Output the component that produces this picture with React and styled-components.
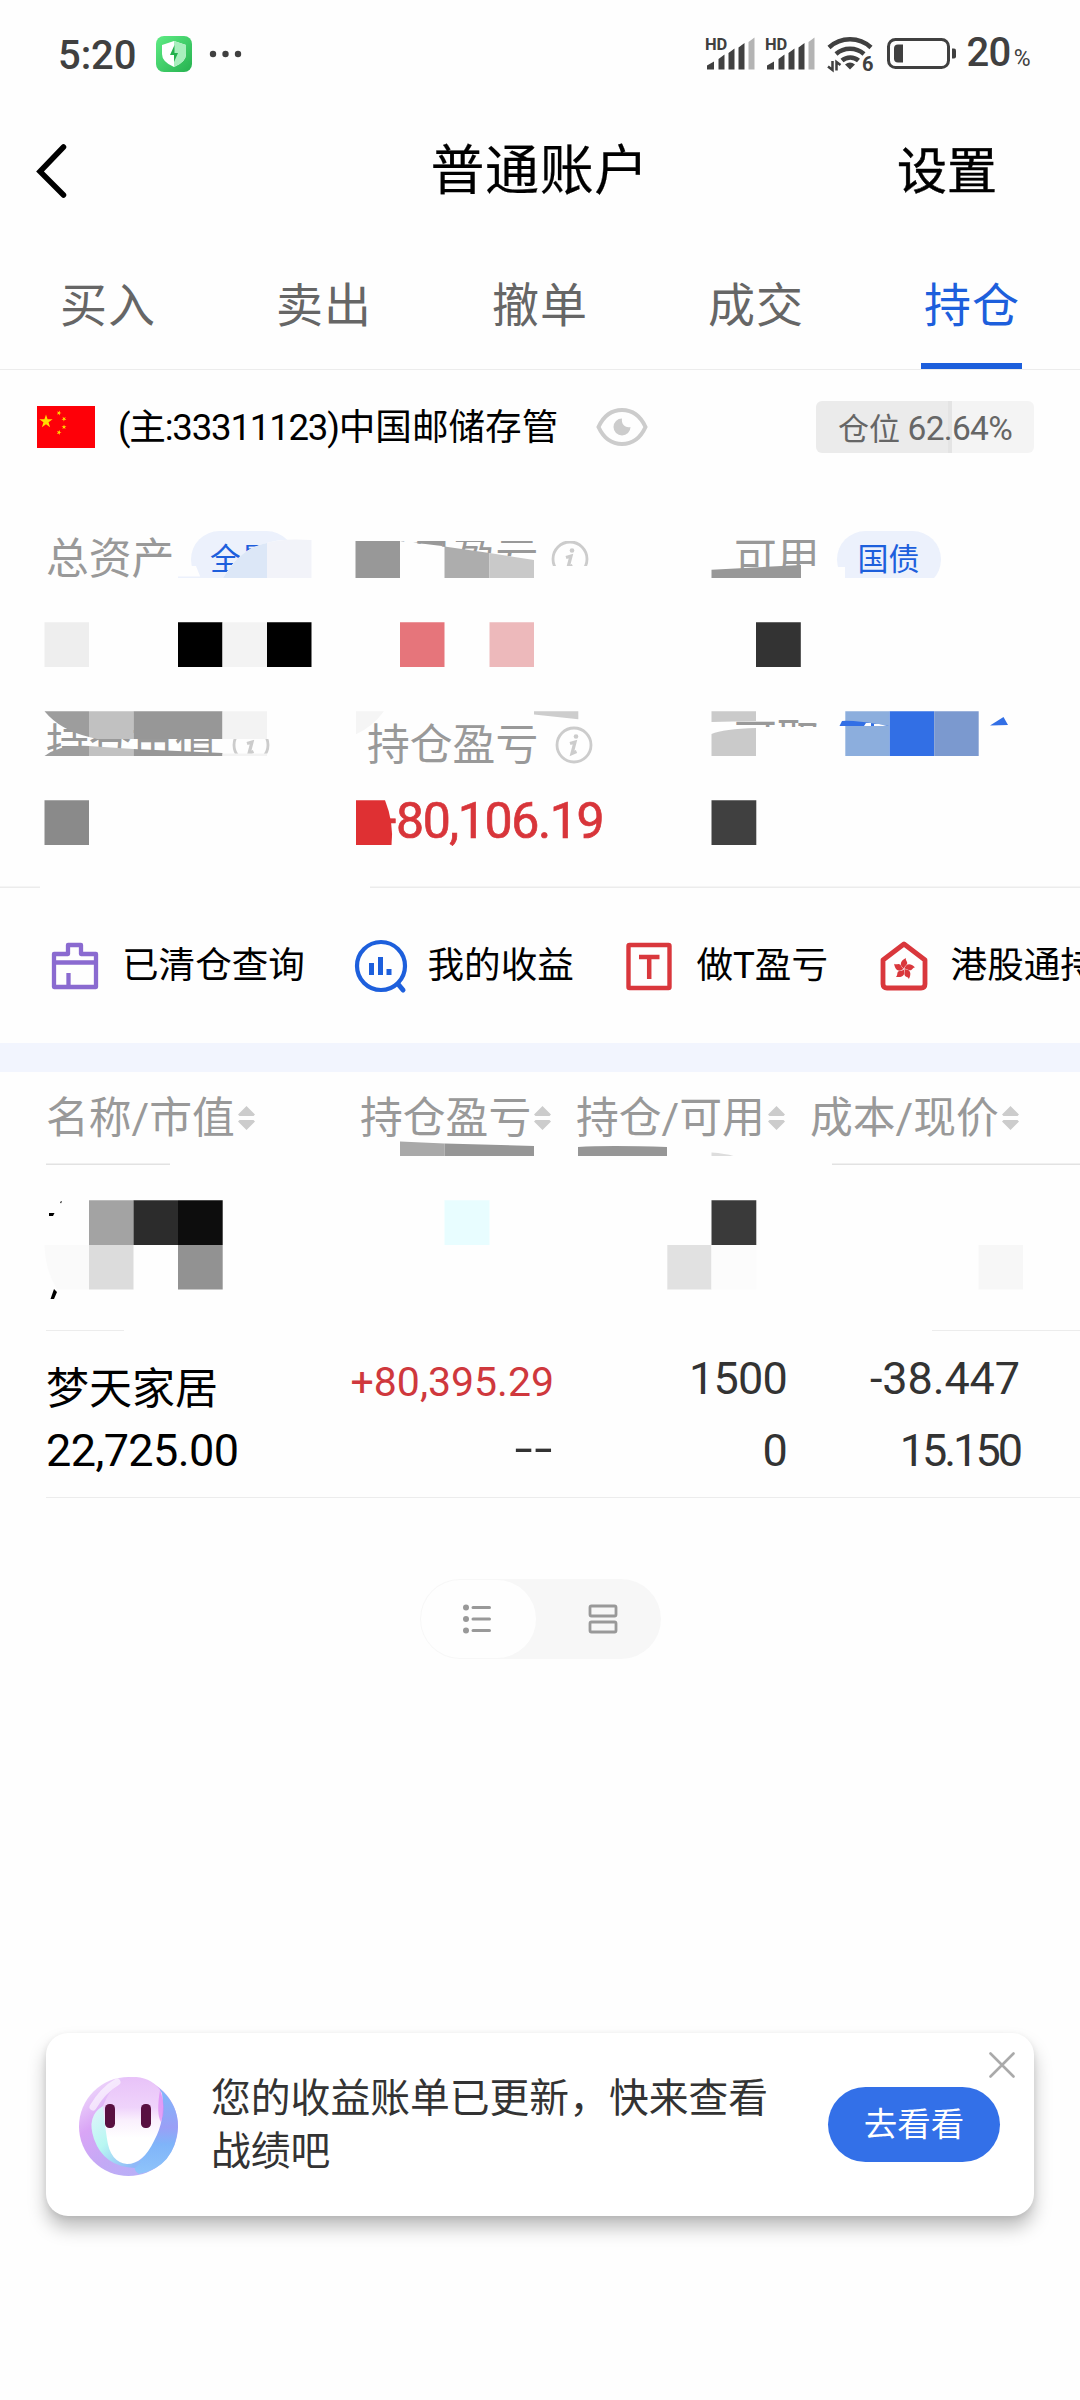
import styled, { createGlobalStyle } from 'styled-components';

const GlobalStyle = createGlobalStyle`
  * {
    box-sizing: border-box;
  }

  body {
    margin: 0;
    background: #fefefe;
    color: #000;
    font-family: Roboto, 'Noto Sans CJK SC', sans-serif;
  }
`;

const Page = styled.div`
  width: 1080px;
  height: 2400px;
  overflow: hidden;
  display: flex;
  flex-direction: column;
  background: #fefefe;
  white-space: nowrap;
`;

const StatusBar = styled.div`
  height: 108px;
  padding: 0 50px 0 58px;
  display: flex;
  justify-content: space-between;
  align-items: center;
  color: #404040;
`;

const StatusGroup = styled.div`
  display: flex;
  align-items: center;
`;

const Clock = styled.span`
  width: 98px;
  padding-top: 3px;
  font-size: 40px;
  font-weight: 500;
  line-height: 108px;
  letter-spacing: -0.1px;
`;

const Battery = styled.span`
  padding-top: 4px;
  margin-left: 9px;
  font-size: 40px;
  font-weight: 500;
  line-height: 108px;
  letter-spacing: -0.6px;

  small {
    font-size: 23px;
    font-weight: 400;
    margin-left: 3px;
  }
`;

const Header = styled.header`
  height: 127px;
  padding: 0 83px 0 36px;
  display: grid;
  grid-template-columns: 1fr 216px 1fr;
  align-items: center;

  h1 {
    margin: 0 0 0 22px;
    font-size: 54px;
    font-weight: 400;
    line-height: 80px;
    letter-spacing: 0.6px;
    -webkit-text-stroke: 0.2px #000;
  }
`;

const Settings = styled.span`
  font-size: 50px;
  line-height: 80px;
  text-align: right;
  -webkit-text-stroke: 0.5px #000;
`;

const Tabs = styled.nav`
  height: 135px;
  display: grid;
  grid-template-columns: repeat(5, 1fr);
  border-bottom: 1px solid #ececec;
`;

const Tab = styled.span`
  display: flex;
  flex-direction: column;
  align-items: center;
  justify-content: space-between;
  padding-top: 36px;
  font-size: 47px;
  line-height: 70px;
  letter-spacing: 1px;
  color: ${({ $active }) => ($active ? '#1d5fdc' : '#666')};

  &::after {
    content: '';
    width: 101px;
    height: 6px;
    margin-right: 1px;
    background: ${({ $active }) => ($active ? '#1d5fdc' : 'transparent')};
  }
`;

const Account = styled.section`
  height: 114px;
  padding: 0 46px 0 37px;
  display: flex;
  align-items: center;
`;

const AccountName = styled.span`
  width: 478px;
  margin-left: 23px;
  padding-top: 2px;
  font-size: 36.6px;
  line-height: 60px;
`;

const AccountNo = styled.span`
  letter-spacing: -1.2px;
`;

const Position = styled.span`
  width: 218px;
  height: 52px;
  margin-left: auto;
  border-radius: 6px;
  background: linear-gradient(
    90deg,
    #ebebeb 0 132px,
    #e4e4e4 132px 136px,
    #f4f4f4 136px
  );
  color: #666;
  font-size: 33.5px;
  line-height: 56px;
  text-align: center;
  letter-spacing: -0.7px;

  b {
    font-weight: 400;
    font-size: 31px;
    letter-spacing: 0;
  }
`;

const Assets = styled.section`
  position: relative;
  height: 404px;
  padding: 45px 0 0 46px;
  display: grid;
  grid-template-columns: 321px 367px 1fr;
  grid-template-rows: 60px 112px 88px 60px;
  align-items: center;
`;

const Label = styled.span`
  display: flex;
  align-items: center;
  font-size: 42.8px;
  line-height: 60px;
  color: #999;
  padding-bottom: ${({ $lift }) => $lift || 0}px;
`;

const Pill = styled.span`
  width: 104px;
  height: 57px;
  margin-left: 17px;
  padding-right: ${({ $shift }) => $shift || 0}px;
  border-radius: 29px;
  background: #ecf1fc;
  color: #1d5fdc;
  font-size: 31px;
  line-height: 57px;
  text-align: center;
`;

const Profit = styled.span`
  grid-column: 2;
  grid-row: 4;
  padding: 3px 0 0 2px;
  color: #d8353a;
  font-size: 50px;
  line-height: 60px;
  letter-spacing: -1.4px;
  -webkit-text-stroke: 0.7px #d8353a;
`;

const Mosaic = styled.svg`
  position: absolute;
  left: 0;
  top: 0;
  width: 1080px;
  height: 100%;
`;

const Shortcuts = styled.section`
  height: 155px;
  padding: 1px 0 0 47px;
  display: flex;
  align-items: center;
  gap: 47.6px;
  overflow: hidden;
`;

const Shortcut = styled.span`
  display: flex;
  flex: none;
  align-items: center;
  gap: 19px;
  font-size: 36.6px;
  line-height: 60px;
`;

const Band = styled.div`
  height: 29px;
  background: #f2f5fe;
`;

const Holdings = styled.section`
  position: relative;
  height: 427px;
`;

const HoldingsHead = styled.div`
  height: 92px;
  padding-left: 46px;
  display: grid;
  grid-template-columns: 314px 216px 234px 1fr;
  align-items: center;
`;

const Sortable = styled.span`
  display: flex;
  align-items: center;
  gap: 3px;
  color: #999;
  font-size: 42.8px;
  line-height: 60px;
`;

const Holding = styled.div`
  height: 167px;
  margin-left: 46px;
  padding: 0 0 24px 1px;
  display: grid;
  grid-template-columns: 255px 252px 233px 233px;
  border-bottom: 1px solid #ececec;
`;

const Cell = styled.div`
  display: flex;
  flex-direction: column;
  justify-content: flex-end;
  align-items: ${({ $left }) => ($left ? 'flex-start' : 'flex-end')};
  gap: ${({ $gap }) => $gap}px;
  color: ${({ $left }) => ($left ? '#000' : '#333')};
  font-size: 45px;
  line-height: 44px;
`;

const Figure = styled.span`
  letter-spacing: ${({ $spacing }) => $spacing || -0.6}px;
  margin-left: -1px;
`;

const Name = styled.span`
  font-size: 43px;
  margin-left: -1px;
`;

const Gain = styled.span`
  color: #cf383d;
  font-size: 41px;
`;

const Dashes = styled.span`
  font-size: 66px;
  font-weight: 300;
  line-height: 48px;
  letter-spacing: 1px;
`;

const Toggle = styled.div`
  align-self: center;
  width: 241px;
  height: 80px;
  margin: 80px 0 374px;
  border-radius: 40px;
  background: #f7f7f7;
  display: flex;
`;

const ToggleItem = styled.span`
  flex: 1 0 ${({ $active }) => ($active ? 113 : 120)}px;
  margin: 1px;
  padding: ${({ $active }) => ($active ? '0 3px 0 0' : '0 0 0 8px')};
  border-radius: 40px;
  background: ${({ $active }) => ($active ? '#fefefe' : 'transparent')};
  display: flex;
  align-items: center;
  justify-content: center;
`;

const Notice = styled.aside`
  position: relative;
  height: 183px;
  margin: 0 46px;
  padding: 0 34px 0 32px;
  display: flex;
  align-items: center;
  border-radius: 22px;
  background: #fff;
  box-shadow: 0 12px 18px rgba(0, 0, 0, 0.25), 0 2px 6px rgba(0, 0, 0, 0.08);

  p {
    margin: 0 0 0 32px;
    color: #333;
    font-size: 39.8px;
    line-height: 53px;
  }
`;

const Go = styled.button`
  width: 172px;
  height: 75px;
  margin-left: auto;
  padding: 0;
  border: 0;
  border-radius: 38px;
  background: #3370e8;
  color: #fff;
  font: 33.5px/75px Roboto, 'Noto Sans CJK SC', sans-serif;
`;

const Close = styled.svg`
  position: absolute;
  top: 19px;
  right: 19px;
`;

const InfoIcon = styled.svg`
  margin-left: ${({ $gap }) => $gap}px;
`;

const AvatarIcon = styled.svg`
  margin-top: 4px;
`;

const Signal = () => (
  <svg width="60" height="52" viewBox="0 -8 60 52" fill="#404040">
    <text x="0" y="13.5" fontSize="16.5" fontWeight="700" letterSpacing="-0.2">
      HD
    </text>
    <path d="M2 33.500v-4l7-4v8zM13.500 33.500V23l6-4.500v15zM23.500 33.500V17l6-4.500v21zM33.500 33.500V11.500l6-4.500v26.500z" />
    <path fill="#b4b4b4" d="M43.500 33.500V6l6-4.500v32z" />
  </svg>
);

const Wifi = () => (
  <svg width="58" height="52" viewBox="0 -6 58 52" fill="none" stroke="#404040">
    <path strokeWidth="4.500" d="M4 13.500a31 31 0 0 1 42 0" />
    <path strokeWidth="4.500" d="M11 20a21.500 21.500 0 0 1 28 0" />
    <path strokeWidth="4.500" d="M17 26.500a12.500 12.500 0 0 1 16.500 0" />
    <path stroke="none" fill="#404040" d="M20 30.500q5-4 10 0l-5 5z" />
    <path strokeWidth="2.500" d="M7.500 27v9L3 32.500M11.500 36.500v-8.500L15.500 31" />
    <text
      x="37"
      y="37"
      fontSize="20"
      fontWeight="700"
      stroke="none"
      fill="#404040"
    >
      6
    </text>
  </svg>
);

const Info = ({ gap }) => (
  <InfoIcon
    $gap={gap}
    width="38"
    height="38"
    viewBox="0 0 38 38"
    fill="none"
    stroke="#ccc"
  >
    <circle cx="19" cy="19" r="17" strokeWidth="2.800" />
    <circle cx="21" cy="10.500" r="2.300" fill="#ccc" stroke="none" />
    <path strokeWidth="3.200" d="M15 17.500l5-1.500-3 11.500 4.500-2" />
  </InfoIcon>
);

const Star = ({ x, y, r, turn = 0 }) => (
  <path
    fill="#ffde00"
    transform={`translate(${x} ${y}) rotate(${turn}) scale(${r})`}
    d="M0-1L.225-.309.951-.309.363.118.588.809 0 .382-.588.809-.363.118-.951-.309-.225-.309z"
  />
);

const Flag = () => (
  <svg width="58" height="42" viewBox="0 0 58 42">
    <rect width="58" height="42" fill="#fe0008" />
    <Star x={9} y={15.5} r={7} />
    <Star x={22} y={7} r={2.6} turn={20} />
    <Star x={27} y={13} r={2.6} turn={40} />
    <Star x={27} y={21} r={2.6} />
    <Star x={22} y={26.5} r={2.6} turn={20} />
  </svg>
);

const Eye = () => (
  <svg width="52" height="40" viewBox="0 0 52 40" fill="none">
    <path
      stroke="#ccc"
      strokeWidth="4"
      d="M2.500 20C8 8 17 3 26 3s18 5 23.500 17C44 32 35 37 26 37S8 32 2.500 20z"
    />
    <path
      fill="#ccc"
      d="M26 11.500a8.500 8.500 0 1 0 8.500 8.500c-5 1.500-9.500-3-8.500-8.500z"
    />
  </svg>
);

const SortIcon = () => (
  <svg width="17" height="24" viewBox="0 0 17 24" fill="#ccc">
    <path d="M8.500 0L17 8.500 15.500 10h-14L0 8.500zM8.500 24L17 15.500 15.500 14h-14L0 15.500z" />
  </svg>
);

const SoldIcon = () => (
  <svg width="56" height="56" viewBox="0 0 56 56" fill="none" stroke="#8a6ad0">
    <path
      strokeWidth="4.300"
      strokeLinejoin="round"
      d="M7 16h14V7h13v9h15v33H7zM7 24.500h42M21.500 49V35"
    />
  </svg>
);

const IncomeIcon = () => (
  <svg width="56" height="56" viewBox="0 0 56 56" fill="none" stroke="#1d5fdc">
    <circle cx="28" cy="28" r="24" strokeWidth="4.200" />
    <path strokeWidth="5" d="M18.500 25v12M27.500 19v18M36 31v6" />
    <path strokeWidth="5" strokeLinecap="round" d="M45 46l5 6" />
  </svg>
);

const TradeIcon = () => (
  <svg width="56" height="56" viewBox="0 0 56 56" fill="none" stroke="#d9373c">
    <rect x="7.500" y="7" width="41" height="43" rx="1" strokeWidth="4.400" />
    <path strokeWidth="4.500" d="M18 19h20.500M28.200 19v22" />
  </svg>
);

const HongKongIcon = () => (
  <svg width="56" height="56" viewBox="0 0 56 56" fill="none">
    <path
      stroke="#d9373c"
      strokeWidth="4.800"
      strokeLinejoin="round"
      d="M28 6l21 16v24q0 4-4 4H11q-4 0-4-4V22z"
    />
    {[0, 72, 144, 216, 288].map((angle) => (
      <path
        key={angle}
        fill="#d9373c"
        transform={`rotate(${angle} 28 31)`}
        d="M28 30.500C23.500 28 23.500 23 30 20c-1 2.500 2 3.500 1 6-.700 1.500-2.500 2-3 4.500z"
      />
    ))}
  </svg>
);

const Avatar = () => (
  <AvatarIcon width="101" height="101" viewBox="0 0 101 101">
    <defs>
      <linearGradient id="ring" x1="0.100" y1="0" x2="0.800" y2="1">
        <stop offset="0" stopColor="#f3e3fc" />
        <stop offset="0.350" stopColor="#d9a5f6" />
        <stop offset="0.650" stopColor="#c3a9f5" />
        <stop offset="1" stopColor="#b5b2f8" />
      </linearGradient>
      <linearGradient id="face" x1="0" y1="0" x2="0" y2="1">
        <stop offset="0" stopColor="#e8c2f8" />
        <stop offset="0.350" stopColor="#efd3fb" />
        <stop offset="0.500" stopColor="#faf0fd" />
        <stop offset="0.700" stopColor="#fff" />
      </linearGradient>
      <linearGradient id="side" x1="0" y1="0" x2="0" y2="1">
        <stop offset="0" stopColor="#7db8fa" />
        <stop offset="0.450" stopColor="#9a9ff6" />
        <stop offset="0.650" stopColor="#7fb4f9" />
        <stop offset="1" stopColor="#8fc4fa" />
      </linearGradient>
      <linearGradient id="inner" x1="0" y1="0" x2="0.800" y2="1">
        <stop offset="0" stopColor="#e3f3fb" />
        <stop offset="0.500" stopColor="#b8f7f2" />
        <stop offset="1" stopColor="#8fb8f8" />
      </linearGradient>
    </defs>
    <circle cx="50.500" cy="50.500" r="49.500" fill="url(#ring)" />
    <path
      fill="url(#side)"
      d="M82 13Q100 28 100 51q-3 40-39 47-6-3-4-10Q84 70 82 13z"
    />
    <path fill="url(#inner)" d="M25 30Q8 40 16 63q10 28 41 29l6-6Q30 80 27 30z" />
    <path
      fill="url(#face)"
      d="M25 30Q36 1 58 1q17 1 26 16 4 26-8 48-11 23-27 23-17-2-20-25-3-20-4-33z"
    />
    <path fill="#dd86f4" fillOpacity="0.700" d="M82 14q7 18 1 32-5-8-1-32z" />
    <path
      fill="none"
      stroke="#fff"
      strokeOpacity="0.600"
      strokeWidth="7"
      strokeLinecap="round"
      d="M15 31Q25 14 39 6"
    />
    <rect x="27" y="28" width="10" height="24" rx="4.500" fill="#591041" />
    <rect x="63" y="28" width="10" height="24" rx="4.500" fill="#591041" />
  </AvatarIcon>
);

const columns = ['名称/市值', '持仓盈亏', '持仓/可用', '成本/现价'];

const App = () => (
  <>
    <GlobalStyle />
    <Page>
      <StatusBar>
        <StatusGroup>
          <Clock>5:20</Clock>
          <svg width="86" height="36" viewBox="0 0 86 36">
            <defs>
              <linearGradient id="guard" x1="0" y1="0" x2="1" y2="1">
                <stop offset="0" stopColor="#5fec84" />
                <stop offset="1" stopColor="#25b14f" />
              </linearGradient>
            </defs>
            <rect width="36" height="36" rx="8" fill="url(#guard)" />
            <path
              fill="#fff"
              d="M18 5l12 4v9q0 8-12 13Q6 26 6 18V9z"
            />
            <path fill="#a8efbd" d="M18 5l12 4v9q0 8-12 13z" />
            <path fill="#22b14c" d="M18.500 9v8H22l-4 9v-7h-4z" />
            <g fill="#404040">
              <circle cx="57" cy="18" r="3.200" />
              <circle cx="69.500" cy="18" r="3.200" />
              <circle cx="82" cy="18" r="3.200" />
            </g>
          </svg>
        </StatusGroup>
        <StatusGroup>
          <Signal />
          <Signal />
          <Wifi />
          <svg width="74" height="32" viewBox="-1 0 74 32">
            <rect
              x="4.500"
              y="1.500"
              width="60"
              height="28"
              rx="7"
              fill="none"
              stroke="#404040"
              strokeWidth="3"
            />
            <path fill="#404040" d="M19 6.500v18h-5q-4 0-4-4v-10q0-4 4-4z" />
            <path fill="#404040" d="M68 10.500h2q2 0 2 2v6q0 2-2 2h-2z" />
          </svg>
          <Battery>
            20<small>%</small>
          </Battery>
        </StatusGroup>
      </StatusBar>

      <Header>
        <svg width="32" height="56" viewBox="0 0 32 56" fill="none">
          <path
            stroke="#000"
            strokeWidth="5.500"
            strokeLinecap="round"
            d="M27.500 3L4 27.500 27.500 51"
          />
        </svg>
        <h1>普通账户</h1>
        <Settings>设置</Settings>
      </Header>

      <Tabs>
        {['买入', '卖出', '撤单', '成交', '持仓'].map((tab) => (
          <Tab key={tab} $active={tab === '持仓'}>
            {tab}
          </Tab>
        ))}
      </Tabs>

      <Account>
        <Flag />
        <AccountName>
          <AccountNo>(主:33311123)</AccountNo>中国邮储存管
        </AccountName>
        <Eye />
        <Position>
          <b>仓位</b> 62.64%
        </Position>
      </Account>

      <Assets>
        <Label>
          总资产<Pill $shift={5}>全景</Pill>
        </Label>
        <Label>
          当日盈亏
          <Info gap={13} />
        </Label>
        <Label>
          可用<Pill>国债</Pill>
        </Label>
        <span />
        <span />
        <span />
        <Label>
          持仓市值
          <Info gap={15} />
        </Label>
        <Label>
          持仓盈亏
          <Info gap={17} />
        </Label>
        <Label $lift={11}>可取</Label>
        <Profit>+80,106.19</Profit>

        {/* privacy blocks laid over the hidden amounts */}
        <Mosaic viewBox="0 484 1080 404">
          <g fill="#fefefe">
            <path d="M178 578h140v14H178zM178 566h18l4 10v4h-22z" />
            <path d="M223 578c12-20 25-31 44-35 12-4 25-4 60-3v50H223z" />
            <path d="M356 526h178v15H356zM356 578h178v14H356zM400 541l13 2 32 4v31h-45z" />
            <path d="M489 553l45 7v30h-45z" />
            <path d="M545 530h50v11h-50zM545 566h50v20h-50z" />
            <path d="M711 578h110v14H711zM801 566h20v20h-20z" />
            <path d="M830 567h15v25h-15zM830 578h115v14H830z" />
            <path d="M40 756h240v20H40zM267 720h12v19h-12zM267 754h12v19h-12z" />
            <path d="M711 727h120v50H711z" />
          </g>
          <path fill="#ecf1fc" d="M178 576.500h22v1.500h-22z" />
          <path fill="#dce7f7" d="M223 578c12-20 25-31 44-35v35z" />
          <path fill="#f2f3f9" d="M267 543q15-5 44.500-3v38H267z" />
          <path fill="#989898" d="M355.500 541H400v37h-44.500z" />
          <path fill="#999" d="M413 542.500h29v3.500z" />
          <path fill="#adadad" d="M444.500 546.500l45 6.500v25h-45z" />
          <path fill="#c9c9c9" d="M489.500 553l44.500 7v18h-44.500z" />
          <path fill="#989898" d="M711.500 569.700L801 565v13h-89.500z" />

          <path fill="#eee" d="M44.500 622.300H89V667H44.500z" />
          <path fill="#000" d="M178 622.300h44.500V667H178zM267 622.300h44.500V667H267z" />
          <path fill="#f3f3f3" d="M222.500 622.300H267V667h-44.500z" />
          <path fill="#e6757b" d="M400 622.300h44.500V667H400z" />
          <path fill="#edb9bb" d="M489.500 622.300H534V667h-44.500z" />
          <path fill="#333" d="M756 622.300h44.800V667H756z" />

          <path fill="#9d9d9d" d="M44.500 711.300H89V737Q60 730 44.500 711.300zM44.500 756Q60 744 89 746v10z" />
          <path fill="#c1c1c1" d="M89 711.300h44.500V739H97l-8-2zM89 746l44.500 3v7H89z" />
          <path fill="#979797" d="M133.500 711.300h89V739h-89zM133.500 749l89 4v3h-89z" />
          <path fill="#f3f3f3" d="M222.500 711.300H267V739h-44.500zM222.500 753.500H267v2.500h-44.500z" />
          <path fill="#f5f5f5" d="M356 711.300h28q-12 16-28 23z" />
          <path fill="#cdcdcd" d="M534 711.300h44.300v8L534 714.500z" />
          <path fill="#cacaca" d="M711.500 711.300H756V721l-44.500 1zM711.500 734q12-5 44.500-6v28h-44.500z" />
          <path fill="#8caedd" d="M845.300 711.300h44.400V756h-44.400z" />
          <path fill="#326fe5" d="M889.700 711.300h44.500V756h-44.500zM842 721q12-1 47 5h-49.500zM990 725.500l13.500-8.500 4.500 8z" />
          <path fill="#fefefe" d="M866 723h5v3h-7zM874 724h5l8 2h-13z" />
          <path fill="#7b99cf" d="M934.200 711.300h44.500V756h-44.500z" />

          <path fill="#8a8a8a" d="M44.500 800.300H89V845H44.500z" />
          <path fill="#df3033" d="M356 800.300h29q9 22 6.500 44.700H356z" />
          <path fill="#404040" d="M711.500 800.300h44.800V845h-44.800z" />
          <path fill="#ececec" d="M0 886.500h40v1.500H0zM370 886.500h710v1.500H370z" />
        </Mosaic>
      </Assets>

      <Shortcuts>
        <Shortcut>
          <SoldIcon />
          已清仓查询
        </Shortcut>
        <Shortcut>
          <IncomeIcon />
          我的收益
        </Shortcut>
        <Shortcut>
          <TradeIcon />
          做T盈亏
        </Shortcut>
        <Shortcut>
          <HongKongIcon />
          港股通持仓
        </Shortcut>
      </Shortcuts>
      <Band />

      <Holdings>
        <HoldingsHead>
          {columns.map((column) => (
            <Sortable key={column}>
              {column}
              <SortIcon />
            </Sortable>
          ))}
        </HoldingsHead>
        <Holding />
        <Holding>
          <Cell $left $gap={18}>
            <Name>梦天家居</Name>
            <Figure>22,725.00</Figure>
          </Cell>
          <Cell $gap={21}>
            <Gain>+80,395.29</Gain>
            <Dashes>--</Dashes>
          </Cell>
          <Cell $gap={28}>
            <Figure $spacing={-0.8}>1500</Figure>
            <Figure $spacing={-0.8}>0</Figure>
          </Cell>
          <Cell $gap={28}>
            <Figure $spacing={-0.1}>-38.447</Figure>
            <Figure $spacing={-3}>15.150</Figure>
          </Cell>
        </Holding>

        <Mosaic viewBox="0 1072 1080 427">
          <path fill="#fefefe" d="M124 1329h808v4H124z" />
          <path fill="#e2e2e2" d="M46 1163.500h124v1.500H46zM832 1163.500h248v1.500H832z" />
          <path fill="#a9a9a9" d="M400 1141.500l44.500 2v12.500H400z" />
          <path fill="#969696" d="M444.500 1143.500l89.500 2.500v10h-89.500zM578 1147q30-2 89 0v9h-89z" />
          <path fill="#ddd" d="M711.500 1152.500q14 1 22 3.500h-22z" />

          <path fill="#000" d="M49 1213h5.500l-1.500 3h-4zM60 1202l2-1-1 2.500zM54 1289l3 3-3 7h-3.500z" />
          <path fill="#a3a3a3" d="M89 1200.300h44.500v44.700H89z" />
          <path fill="#2c2c2c" d="M133.500 1200.300H178v44.700h-44.500z" />
          <path fill="#0d0d0d" d="M178 1200.300h44.700v44.700H178z" />
          <path fill="#fafafa" d="M44.500 1245H89v44.500H57q-12-20-12.500-44.500z" />
          <path fill="#dcdcdc" d="M89 1245h44.500v44.500H89z" />
          <path fill="#929292" d="M178 1245h44.700v44.500H178z" />
          <path fill="#e8fdff" d="M444.500 1200.300h45v44.700h-45z" />
          <path fill="#3a3a3a" d="M711.500 1200.300h44.800v44.700h-44.800z" />
          <path fill="#e1e1e1" d="M667.300 1245h44.200v44.500h-44.200z" />
          <path fill="#fcfcfc" d="M711.500 1245h44.800v44.500h-44.800z" />
          <path fill="#f7f7f7" d="M978.500 1245h44.500v44.500h-44.500z" />
        </Mosaic>
      </Holdings>

      <Toggle>
        <ToggleItem $active>
          <svg width="28" height="30" viewBox="0 0 28 30" fill="#999">
            <circle cx="3" cy="3.500" r="3" />
            <circle cx="3" cy="15" r="3" />
            <circle cx="3" cy="26.500" r="3" />
            <path
              stroke="#999"
              strokeWidth="3"
              strokeLinecap="round"
              d="M10 3.500h16.500M10 15h16.500M10 26.500h16.500"
            />
          </svg>
        </ToggleItem>
        <ToggleItem>
          <svg width="30" height="30" viewBox="0 0 30 30" fill="none">
            <g stroke="#999" strokeWidth="2.800">
              <rect x="2" y="2" width="26" height="10" rx="1.500" />
              <rect x="2" y="18" width="26" height="10" rx="1.500" />
            </g>
          </svg>
        </ToggleItem>
      </Toggle>

      <Notice>
        <Avatar />
        <p>
          您的收益账单已更新，快来查看
          <br />
          战绩吧
        </p>
        <Go>去看看</Go>
        <Close width="26" height="26" viewBox="0 0 26 26">
          <path
            stroke="#aaa"
            strokeWidth="2.600"
            strokeLinecap="round"
            d="M1.500 1.500l23 23M24.500 1.500l-23 23"
          />
        </Close>
      </Notice>
    </Page>
  </>
);

export default App;
